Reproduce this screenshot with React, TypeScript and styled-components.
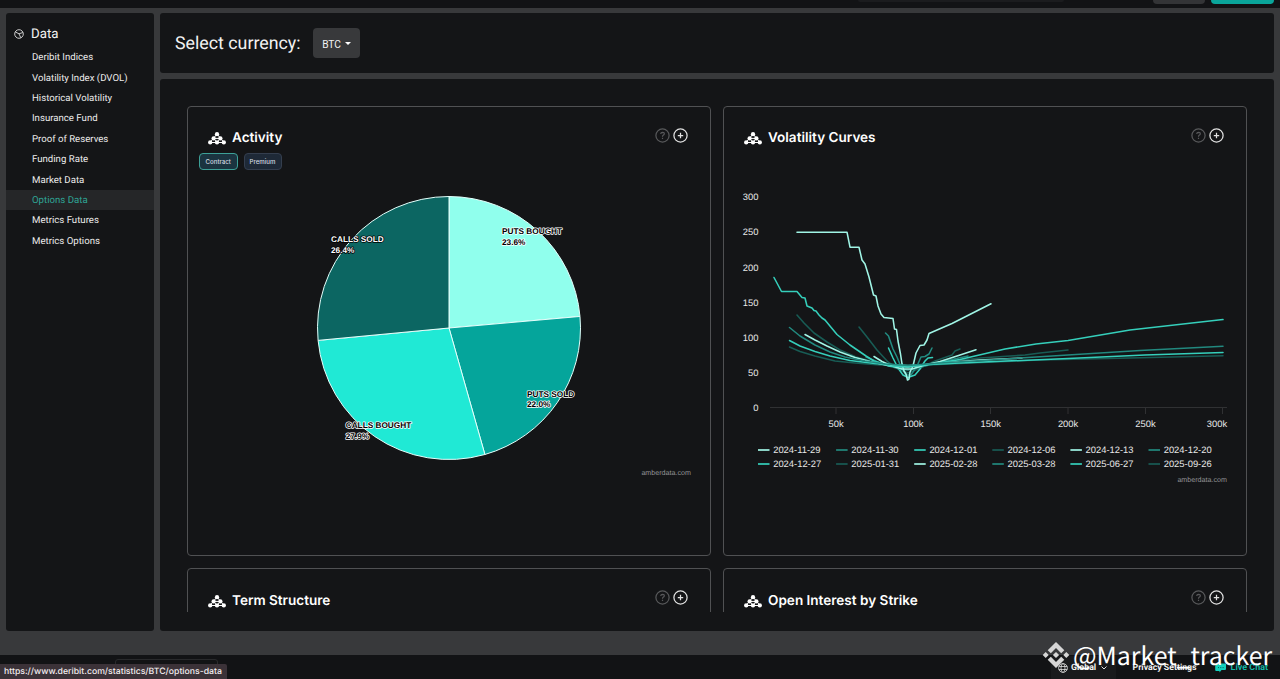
import React from 'react';
import styled, { createGlobalStyle } from 'styled-components';

const GlobalStyle = createGlobalStyle`
  * { box-sizing: border-box; }
  html, body { margin: 0; height: 100%; overflow: hidden; background: #38393b; }
  body { font-family: Roboto, "Liberation Sans", sans-serif; color: #f2f2f2; text-rendering: geometricPrecision; }
  svg { display: block; }
`;

const panel = '#141517';

const Page = styled.div`
  position: relative;
  display: flex;
  flex-direction: column;
  width: 1280px;
  height: 679px;
  background: #38393b;
  overflow: hidden;
`;

const TopBar = styled.header`
  flex: none;
  display: flex;
  justify-content: flex-end;
  align-items: flex-start;
  gap: 6px;
  height: 8px;
  padding-right: 6px;
  background: #121315;
`;

const TopButton = styled.div<{ $width: number; $color: string; $height?: number; $gap?: number }>`
  width: ${p => p.$width}px;
  height: ${p => p.$height ?? 4}px;
  margin-right: ${p => p.$gap ?? 0}px;
  background: ${p => p.$color};
  border-radius: 0 0 4px 4px;
`;

const Body = styled.div`
  flex: none;
  display: flex;
  gap: 6px;
  height: 618px;
  margin: 5px 6px 24px;
`;

const Sidebar = styled.nav`
  width: 148px;
  background: ${panel};
  border-radius: 3px;
`;

const SideHeading = styled.div`
  display: flex;
  align-items: center;
  gap: 7.5px;
  height: 34px;
  padding: 7px 0 0 7.5px;
  font-size: 13.3px;
  line-height: 16px;
`;

const SideLabel = styled.span`
  padding-top: 3px;
`;

const SideItem = styled.a<{ $active?: boolean }>`
  display: flex;
  align-items: center;
  height: 20.4px;
  padding: 1px 0 0 26px;
  font-size: 9.65px;
  color: ${p => (p.$active ? '#2fa596' : '#ececec')};
  background: ${p => (p.$active ? '#252628' : 'transparent')};
`;

const Main = styled.main`
  flex: 1;
  display: flex;
  flex-direction: column;
  gap: 6px;
`;

const CurrencyBar = styled.section`
  flex: none;
  display: flex;
  align-items: center;
  gap: 12px;
  height: 60px;
  padding-left: 15px;
  background: ${panel};
  border-radius: 3px;
  font-size: 17.8px;
`;

const CurrencyLabel = styled.span`
  padding-top: 1px;
`;

const Select = styled.button`
  display: flex;
  align-items: center;
  justify-content: center;
  gap: 4px;
  width: 47px;
  height: 30px;
  padding: 2px 0 0 1px;
  border: 0;
  border-radius: 4px;
  background: #38393b;
  color: #f2f2f2;
  font: 10.2px Roboto, sans-serif;
`;

const Caret = styled.span`
  margin-top: -2px;
  border: 3px solid transparent;
  border-top-color: #fff;
  border-bottom-width: 0;
`;

const Content = styled.section`
  flex: 1;
  min-height: 0;
  padding: 26.5px 27px 0;
  background: ${panel};
  border-radius: 3px;
`;

const Grid = styled.div`
  display: grid;
  grid-template-columns: 524px 524px;
  grid-auto-rows: 450px;
  gap: 12.5px 12px;
  height: 506.5px;
  overflow: hidden;
`;

const Card = styled.article`
  display: flex;
  flex-direction: column;
  border: 1px solid #505153;
  border-radius: 4px;
  font-family: Inter, sans-serif;
`;

const CardHead = styled.div`
  display: flex;
  align-items: center;
  height: 46.5px;
  padding: 15px 22px 0 19px;
`;

const CardTitle = styled.h2`
  flex: 1;
  margin: 0 0 0 5px;
  padding-top: 2px;
  font-size: 13.55px;
  line-height: 18px;
  font-weight: 600;
  color: #fff;
`;

const CardTools = styled.div`
  display: flex;
  gap: 3px;
  margin-top: -4px;
`;

const ToggleRow = styled.div`
  display: flex;
  gap: 6px;
  height: 17px;
  padding-left: 11px;
`;

const Toggle = styled.button<{ $on?: boolean }>`
  width: ${p => (p.$on ? 38.5 : 38)}px;
  height: 17px;
  padding: 0;
  border: 1px solid ${p => (p.$on ? '#3da097' : '#343e4e')};
  border-radius: 4px;
  background: ${p => (p.$on ? '#1b3440' : '#1e2937')};
  color: #d5dbe3;
  font: 500 6.1px Inter, sans-serif;
`;

const Footer = styled.footer`
  flex: 1;
  position: relative;
  display: flex;
  align-items: center;
  justify-content: flex-end;
  padding: 1px 12px 0 0;
  background: #121315;
  font: 700 8.75px Roboto, sans-serif;
`;

const FooterTab = styled.div`
  position: absolute;
  left: 115px;
  top: 4px;
  width: 103px;
  height: 12px;
  border: 1px solid #292a2c;
  border-radius: 3px;
`;

const Region = styled.div`
  display: flex;
  align-items: center;
  gap: 3.5px;
  width: 65px;
  height: 24px;
  padding-left: 7px;
  margin-right: 17px;
  background: #191a1c;
`;

const Chat = styled.div`
  display: flex;
  align-items: center;
  gap: 4.5px;
  margin-left: 18.5px;
  color: #14b8a6;
  font-size: 8.95px;
`;

const StatusUrl = styled.div`
  position: absolute;
  left: 0;
  bottom: 0;
  width: 227px;
  height: 15px;
  padding: 1px 0 0 4px;
  border-radius: 0 2px 0 0;
  background: #3b3238;
  color: #f3eef0;
  font: 500 8.7px/15px Inter, sans-serif;
  white-space: nowrap;
`;

const Watermark = styled.div`
  position: absolute;
  left: 1042px;
  top: 640px;
  display: flex;
  align-items: center;
  gap: 3px;
  height: 30px;
  color: #fff;
  font: 24.9px/30px "Noto Sans CJK SC", sans-serif;
  white-space: nowrap;
`;

const WatermarkName = styled.span`
  padding-bottom: 0;
`;

const DataIcon = () => (
  <svg width="10" height="10" viewBox="0 0 10 10" fill="none" stroke="#dcdcdc" strokeWidth="0.9">
    <circle cx="5" cy="5" r="4.3" />
    <path d="M1.2 2.9 L5 4.8 L8.9 3.5 M5 4.8 L6.8 8.8" />
  </svg>
);

const PyramidIcon = () => (
  <svg width="20" height="16" viewBox="0 0 20 16" fill="#fff" stroke="none">
    <path d="M10 5 L3 13.5 M10 5 L17 13.5 M6.5 9.4 H13.5 M6.6 9.4 L10 13.5 L13.4 9.4 M3 13.5 H17" stroke="#fff" strokeWidth="1" fill="none" />
    <circle cx="10" cy="5.2" r="2.15" />
    <circle cx="6.6" cy="9.4" r="2.15" />
    <circle cx="13.4" cy="9.4" r="2.15" />
    <circle cx="3.2" cy="13.4" r="2.15" />
    <circle cx="10" cy="13.4" r="2.15" />
    <circle cx="16.8" cy="13.4" r="2.15" />
  </svg>
);

const HelpIcon = () => (
  <svg width="15" height="15" viewBox="0 0 15 15" fill="none" stroke="#58595b" strokeWidth="1.2">
    <circle cx="7.5" cy="7.5" r="6.6" />
    <path d="M5.7 6 Q5.8 4.3 7.6 4.3 Q9.4 4.4 9.3 5.9 Q9.2 6.8 8.2 7.3 Q7.5 7.7 7.5 8.7 M7.5 9.8 V11" />
  </svg>
);

const PlusIcon = () => (
  <svg width="15" height="15" viewBox="0 0 15 15" fill="none" stroke="#e2e2e2" strokeWidth="1.25">
    <circle cx="7.5" cy="7.5" r="6.6" />
    <path d="M7.5 4.8 V10.2 M4.8 7.5 H10.2" />
  </svg>
);

const GlobeIcon = () => (
  <svg width="10" height="10" viewBox="0 0 10 10" fill="none" stroke="#ddd" strokeWidth="0.8">
    <circle cx="5" cy="5" r="4.4" />
    <ellipse cx="5" cy="5" rx="2" ry="4.4" />
    <path d="M0.8 3.5 H9.2 M0.8 6.5 H9.2" />
  </svg>
);

const ChatIcon = () => (
  <svg width="11" height="10" viewBox="0 0 11 10">
    <path d="M3 0.5 H10 Q11 0.5 11 1.5 V6 Q11 7 10 7 H6.5 L4.5 9.5 V8 H1.2 Q0.2 8 0.2 7 V3 Q0.2 2 1.2 2 H2 V1.5 Q2 0.5 3 0.5Z" fill="#14d0bd" />
    <path d="M3 4.6 H4 M5.3 4.6 H6.3 M7.6 4.6 H8.6" stroke="#0b5c55" strokeWidth="1" />
  </svg>
);

const DiamondLogo = () => (
  <svg width="28" height="28" viewBox="0 0 28 28" fill="#d6d6d6">
    <path d="M14 1 L22.3 9.2 L19.2 12.2 L14 7 L8.8 12.2 L5.7 9.2Z" />
    <path d="M14 27 L22.3 18.8 L19.2 15.8 L14 21 L8.8 15.8 L5.7 18.8Z" />
    <path d="M3.7 11 L6.7 14 L3.7 17 L0.7 14Z M24.3 11 L27.3 14 L24.3 17 L21.3 14Z M14 10.9 L17.1 14 L14 17.1 L10.9 14Z" />
  </svg>
);

const SliceLabel = styled.text<{ $light?: boolean }>`
  font: 700 8.25px "Liberation Sans", sans-serif;
  fill: ${p => (p.$light ? '#fff' : '#000')};
  stroke: ${p => (p.$light ? '#000' : '#fff')};
  stroke-width: 1.5px;
  stroke-linejoin: round;
  paint-order: stroke;
`;

const AxisText = styled.text`
  font: 9.4px "Liberation Sans", sans-serif;
  fill: #e8e8e8;
`;

const Credit = styled.text`
  font: 7.15px "Liberation Sans", sans-serif;
  fill: #939496;
  text-anchor: end;
`;

const slices = [
  { name: 'PUTS BOUGHT', share: 23.6, color: '#90ffed', x: 502, y: 234.2 },
  { name: 'PUTS SOLD', share: 22.0, color: '#05a59b', x: 527, y: 396.5 },
  { name: 'CALLS BOUGHT', share: 27.9, color: '#20e9d5', x: 345.7, y: 428.4 },
  { name: 'CALLS SOLD', share: 26.5, label: '26.4%', color: '#0c6662', x: 331, y: 242.4, light: true },
];

const PieChart = () => {
  const cx = 449, cy = 328, r = 131.5;
  let angle = 0;
  const point = (a: number) => `${cx + r * Math.sin(a)} ${cy - r * Math.cos(a)}`;
  return (
    <svg width="522" height="320" viewBox="188 170 522 320">
      {slices.map(s => {
        const from = angle;
        angle += (s.share / 100) * Math.PI * 2;
        return (
          <path key={s.name} d={`M${cx} ${cy} L${point(from)} A${r} ${r} 0 0 1 ${point(angle)}Z`}
            fill={s.color} stroke="#e4fffb" strokeWidth="1" strokeLinejoin="round" />
        );
      })}
      {slices.map(s => (
        <SliceLabel key={s.name} $light={s.light} x={s.x} y={s.y}>
          {s.name}
          <tspan x={s.x} dy="10.3">{s.label ?? `${s.share.toFixed(1)}%`}</tspan>
        </SliceLabel>
      ))}
      <Credit x="691" y="474.7">amberdata.com</Credit>
    </svg>
  );
};

const tones = { pale: '#a0f5e6', mid: '#22897f', bright: '#35cfbb', dark: '#185c55' };

const curves = [
  { color: tones.dark, points: '859,327 867,337 877,350 888,362 898,369 908,373 918,369 935,361 952,355 955,351 960,349' },
  { color: tones.mid, points: '885.5,333 888.5,336 893,349 897,357 901,367 906,375 911,375 917,366 921,357 925,356.5 929,354 932,348' },
  { color: tones.bright, points: '888.5,348 893,358 898,368 903,375 908,377.5 915,375 920,369 925,361 928,358 932.5,357.5' },
  { color: tones.dark, points: '797,315 804,323 814,333 827,342 840,350 856,357 875,362 892,365 908,366.5 935,363 980,358 1025,355 1040,353 1068,350' },
  { color: tones.mid, points: '866,357 885,365 900,369 908,370 925,366 945,361 968,356' },
  { color: tones.dark, points: '789.5,347 800,351.5 815,356 835,361 855,363 880,365 908,366 960,363.5 1040,360 1130,358 1223,355.8' },
  { color: tones.pale, points: '805,334.5 815,340 827,346 840,352 855,357.5 870,361.5 890,366 908,367 935,363.5 980,360 1022,358' },
  { color: tones.pale, points: '874,356.5 882,361.5 892,366 902,369 912,369 925,365 940,361.5 957,356 976,349.8' },
  { color: tones.pale, points: '797,232.2 847,232.2 850,247.2 859,247.2 862,260 865,264 869,277 873.5,295 876,296 878,306 881,314 884,317.5 893,318.5 894.5,329 896.5,329.5 898,341 900.5,354 902,364 904,371 906,374 907.5,380 909,379 910,372 913,366 916,353 920,345.5 924,345 927,340 929,333.5 952,323.5 991,303.8' },
  { color: tones.bright, points: '774,277.5 781.5,291.5 797,291.5 802,297.5 805,298 807,306 812,308 814,310.5 816,311 819,315 822,318 825,320 837,334.5 850,345 866,356 874,361 890,366 908,367 932,364 960,359.5 1005,349 1036,344 1068,340.5 1130,330 1223,319.6' },
  { color: tones.bright, points: '789.5,340.5 800,346 815,351.5 830,356 850,360.5 875,363.5 908,365.5 960,363 1068,358.5 1145,355 1223,352.6' },
  { color: tones.mid, points: '789.5,327.5 800,336 815,345 830,352 845,357 865,361 885,364 908,365.5 940,363 990,360 1068,355 1140,350.5 1223,346.3' },
];

const legend = [
  ['2024-11-29', tones.pale], ['2024-11-30', tones.mid], ['2024-12-01', tones.bright],
  ['2024-12-06', tones.dark], ['2024-12-13', tones.pale], ['2024-12-20', tones.mid],
  ['2024-12-27', tones.bright], ['2025-01-31', tones.dark], ['2025-02-28', tones.pale],
  ['2025-03-28', tones.mid], ['2025-06-27', tones.bright], ['2025-09-26', tones.dark],
];

const VolatilityChart = () => (
  <svg width="522" height="337" viewBox="724 153 522 337">
    {[0, 50, 100, 150, 200, 250, 300].map(v => (
      <AxisText key={v} x="758.5" y={410.7 - v * 0.701} textAnchor="end">{v}</AxisText>
    ))}
    <path d="M770 407.5 H1227 M836 407.5 V414 M913.5 407.5 V414 M990.5 407.5 V414 M1068 407.5 V414 M1145.5 407.5 V414 M1222.5 407.5 V414"
      stroke="#303133" fill="none" />
    {[50, 100, 150, 200, 250, 300].map((k, i) => (
      <AxisText key={k} x={i === 5 ? 1217 : 836 + i * 77.35} y="427.2" textAnchor="middle">{k}k</AxisText>
    ))}
    {curves.map((c, i) => (
      <polyline key={i} points={c.points} fill="none" stroke={c.color} strokeWidth="1.55"
        strokeLinejoin="round" strokeLinecap="round" />
    ))}
    {legend.map(([date, color], i) => {
      const x = 758 + (i % 6) * 78.1;
      const y = i < 6 ? 450 : 464;
      return (
        <g key={date}>
          <path d={`M${x} ${y} h11.5`} stroke={color} strokeWidth="1.7" />
          <AxisText x={x + 15.2} y={y + 3.1}>{date}</AxisText>
        </g>
      );
    })}
    <Credit x="1227" y="482">amberdata.com</Credit>
  </svg>
);

const ChartCard = ({ title, children }: { title: string; children?: React.ReactNode }) => (
  <Card>
    <CardHead>
      <PyramidIcon />
      <CardTitle>{title}</CardTitle>
      <CardTools><HelpIcon /><PlusIcon /></CardTools>
    </CardHead>
    {children}
  </Card>
);

const links = [
  'Deribit Indices', 'Volatility Index (DVOL)', 'Historical Volatility', 'Insurance Fund',
  'Proof of Reserves', 'Funding Rate', 'Market Data', 'Options Data', 'Metrics Futures', 'Metrics Options',
];

export default function App() {
  return (
    <>
      <GlobalStyle />
      <Page>
        <TopBar>
          <TopButton $width={206} $color="#1b1c1e" $height={2} $gap={83} />
          <TopButton $width={52} $color="#333436" />
          <TopButton $width={63} $color="#0aa59a" />
        </TopBar>
        <Body>
          <Sidebar>
            <SideHeading><DataIcon /><SideLabel>Data</SideLabel></SideHeading>
            {links.map(l => <SideItem key={l} $active={l === 'Options Data'}>{l}</SideItem>)}
          </Sidebar>
          <Main>
            <CurrencyBar>
              <CurrencyLabel>Select currency:</CurrencyLabel>
              <Select>BTC<Caret /></Select>
            </CurrencyBar>
            <Content>
              <Grid>
                <ChartCard title="Activity">
                  <ToggleRow>
                    <Toggle $on>Contract</Toggle>
                    <Toggle>Premium</Toggle>
                  </ToggleRow>
                  <PieChart />
                </ChartCard>
                <ChartCard title="Volatility Curves"><VolatilityChart /></ChartCard>
                <ChartCard title="Term Structure" />
                <ChartCard title="Open Interest by Strike" />
              </Grid>
            </Content>
          </Main>
        </Body>
        <Footer>
          <FooterTab />
          <Region>
            <GlobeIcon />Global
            <svg width="8" height="6" viewBox="0 0 8 6" fill="none" stroke="#ddd"><path d="M1.5 1.5 L4 4 L6.5 1.5" /></svg>
          </Region>
          Privacy Settings
          <Chat><ChatIcon />Live Chat</Chat>
        </Footer>
        <StatusUrl>https://www.deribit.com/statistics/BTC/options-data</StatusUrl>
        <Watermark><DiamondLogo /><WatermarkName>@Market_tracker</WatermarkName></Watermark>
      </Page>
    </>
  );
}
